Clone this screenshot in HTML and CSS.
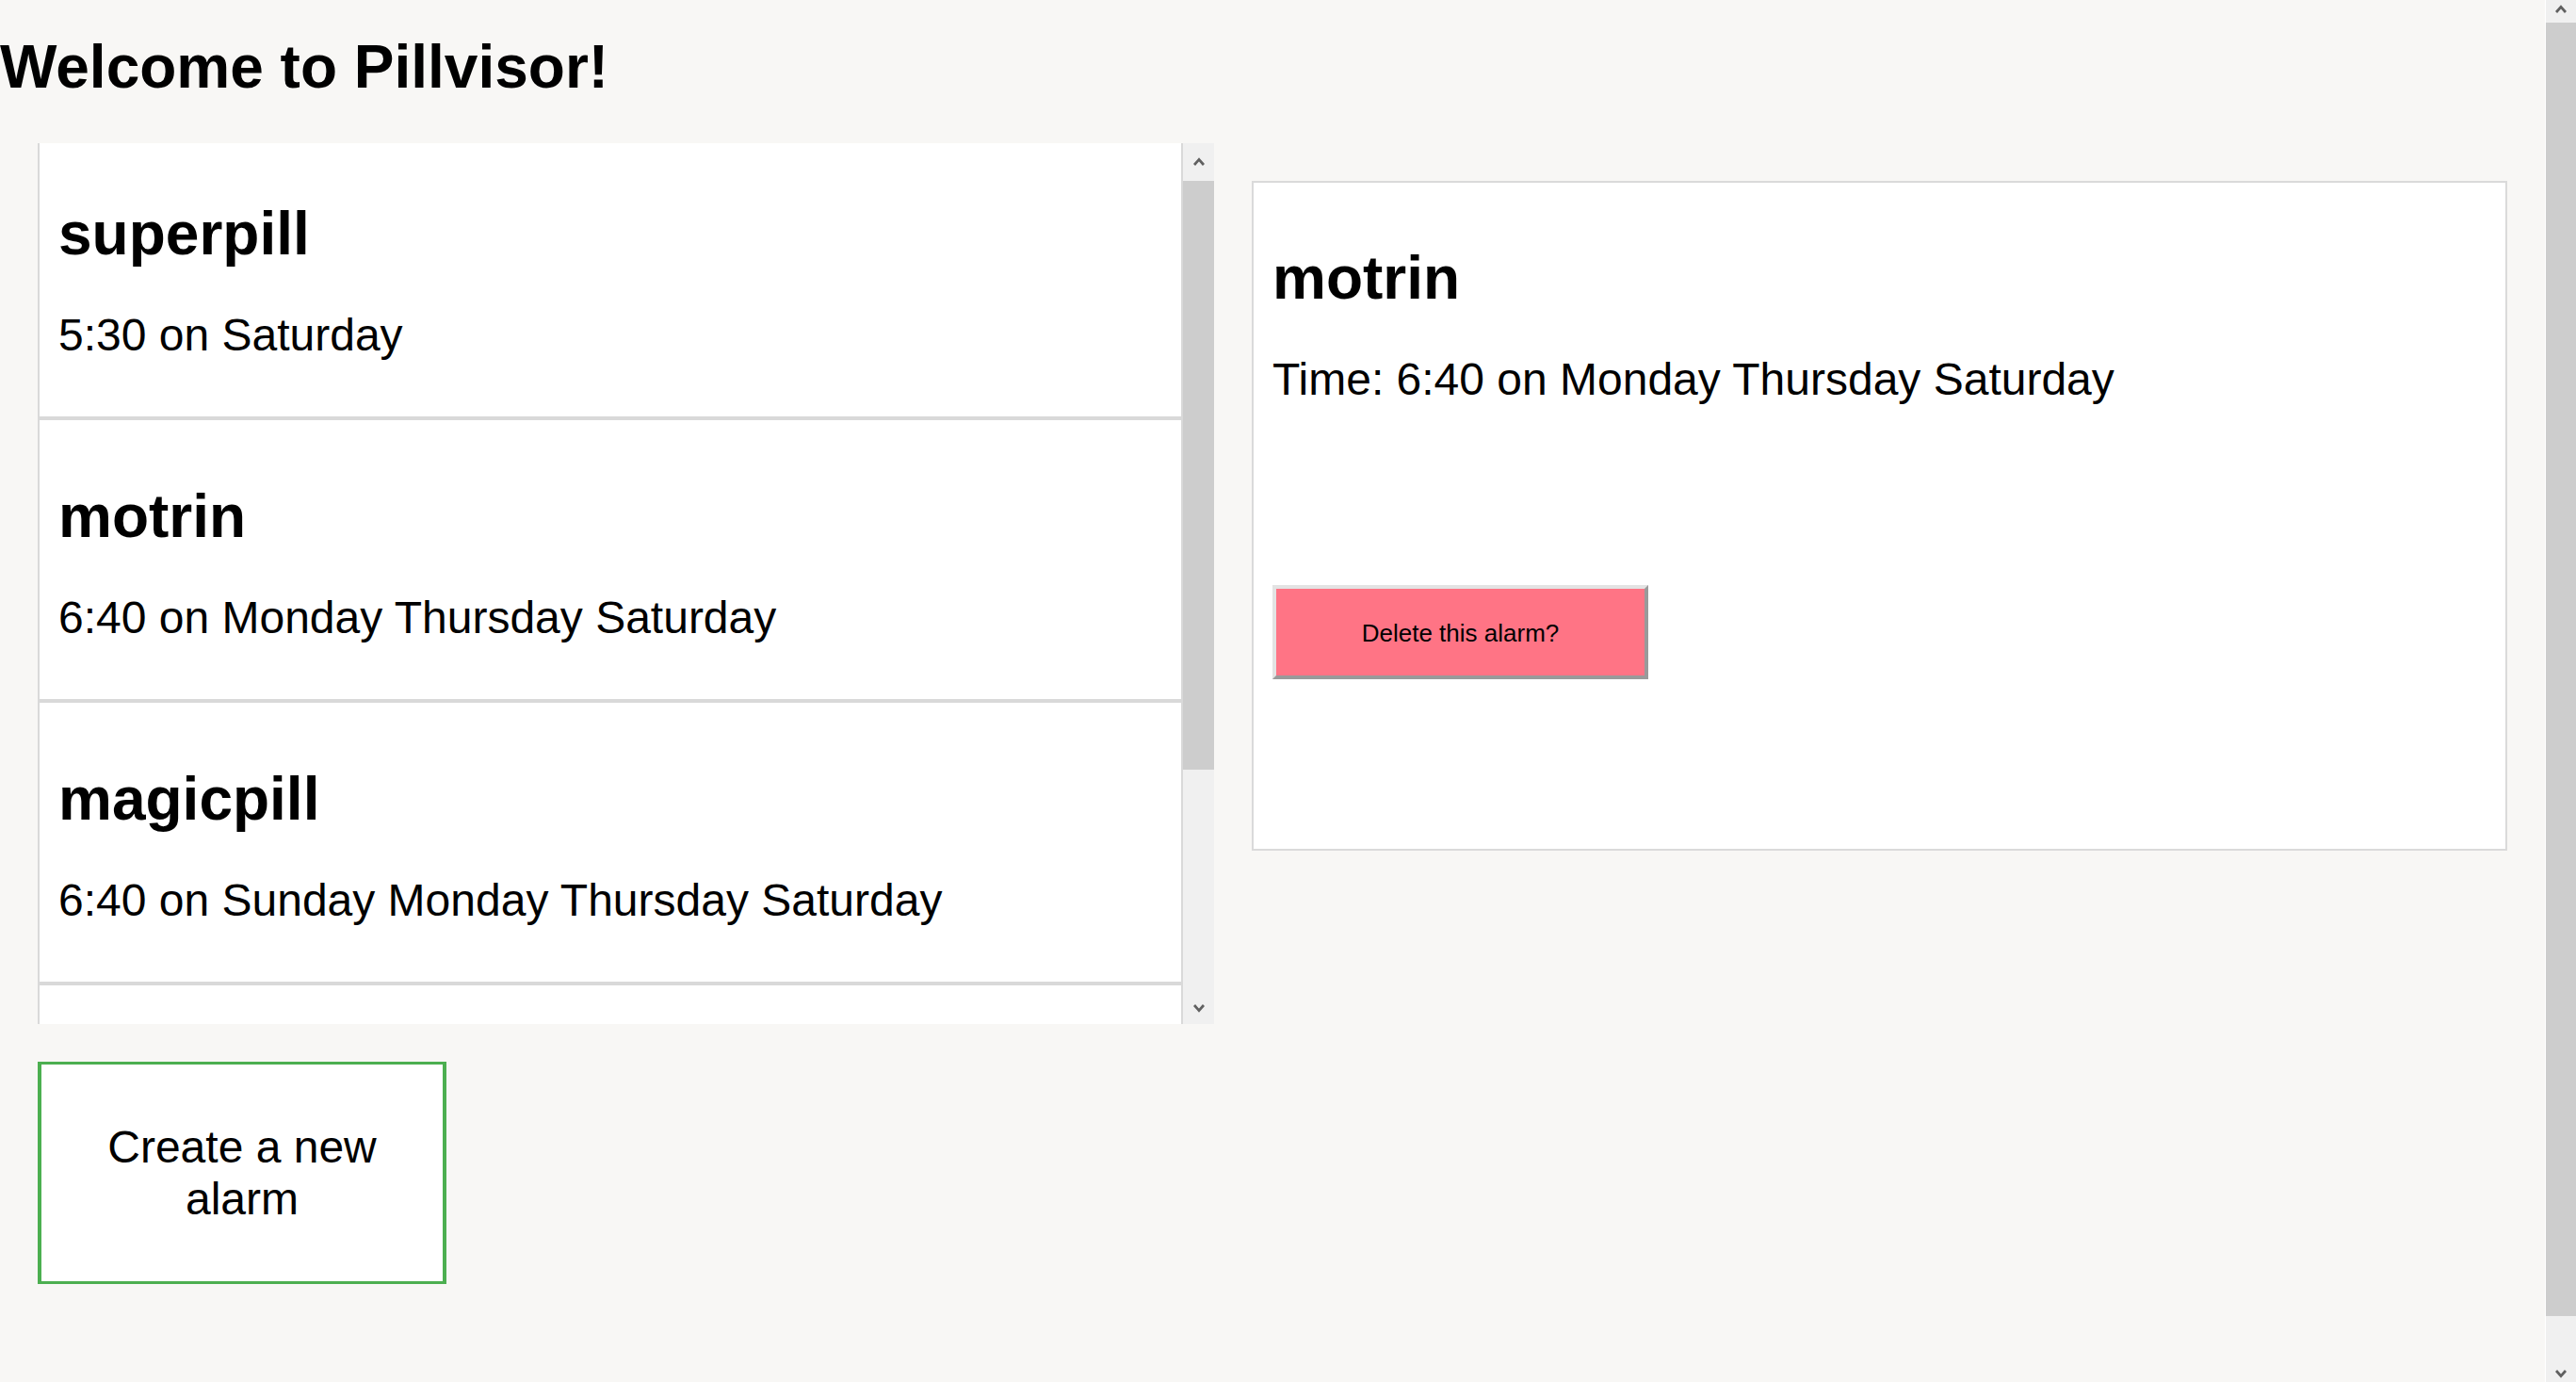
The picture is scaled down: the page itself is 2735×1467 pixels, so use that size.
FILE: index.html
```html
<!DOCTYPE html>
<html lang="en">
<head>
<meta charset="utf-8">
<title>Pillvisor</title>
<link rel="stylesheet" href="styles.css">
</head>
<body>
<div class="app">
  <main class="main">
    <h1 class="title">Welcome to Pillvisor!</h1>
    <div class="content">
      <div class="left">
        <div class="list">
          <div class="list-view">
            <div class="cards">
              <div class="card">
                <h2 class="card-name">superpill</h2>
                <p class="card-time">5:30 on Saturday</p>
              </div>
              <div class="card">
                <h2 class="card-name">motrin</h2>
                <p class="card-time">6:40 on Monday Thursday Saturday</p>
              </div>
              <div class="card">
                <h2 class="card-name">magicpill</h2>
                <p class="card-time">6:40 on Sunday Monday Thursday Saturday</p>
              </div>
              <div class="card card-empty"></div>
            </div>
          </div>
          <div class="scrollbar list-scrollbar">
            <div class="sb-btn sb-up">
              <svg class="chev" viewBox="0 0 12 9" width="12" height="9"><polyline points="1,8 6,2.4 11,8" /></svg>
            </div>
            <div class="sb-thumb"></div>
            <div class="sb-track"></div>
            <div class="sb-btn sb-down">
              <svg class="chev" viewBox="0 0 12 9" width="12" height="9"><polyline points="1,1 6,6.6 11,1" /></svg>
            </div>
          </div>
        </div>
        <button class="create-btn">Create a new alarm</button>
      </div>
      <section class="detail">
        <h2 class="detail-name">motrin</h2>
        <p class="detail-time">Time: 6:40 on Monday Thursday Saturday</p>
        <button class="delete-btn">Delete this alarm?</button>
      </section>
    </div>
  </main>
  <div class="scrollbar page-scrollbar">
    <div class="psb-btn psb-up">
      <svg class="chev" viewBox="0 0 12 9" width="12" height="9"><polyline points="1,8 6,2.4 11,8" /></svg>
    </div>
    <div class="psb-thumb"></div>
    <div class="sb-track"></div>
    <div class="psb-btn psb-down">
      <svg class="chev" viewBox="0 0 12 9" width="12" height="9"><polyline points="1,1 6,6.6 11,1" /></svg>
    </div>
  </div>
</div>
</body>
</html>
```

FILE: styles.css
```css
html, body {
  margin: 0;
  padding: 0;
  height: 100%;
  overflow: hidden;
}

body {
  background: #f8f7f5;
  color: #000;
  font-family: "Liberation Sans", Arial, sans-serif;
}

.app {
  display: flex;
  height: 100vh;
}

.main {
  flex: 1;
  min-width: 0;
}

.title {
  margin: 39px 0 49px;
  font-size: 64px;
  line-height: 64px;
  font-weight: 700;
}

.content {
  display: flex;
  align-items: flex-start;
  padding-left: 40px;
}

.left {
  width: 1249px;
  flex: none;
}

.list {
  display: flex;
  height: 935px;
  background: #fff;
}

.list-view {
  flex: 1;
  min-width: 0;
  overflow: hidden;
}

.cards {
  margin-top: -8px;
}

.card {
  background: #fff;
  border: 2px solid #d9d9d9;
  padding: 70px 20px 62px;
}

.card-empty {
  height: 164px;
}

.card-name {
  margin: 0;
  font-size: 64px;
  line-height: 64px;
  font-weight: 700;
}

.card-time {
  margin: 52px 0 0;
  font-size: 48px;
  line-height: 48px;
}

/* fake scrollbars */
.scrollbar {
  width: 33px;
  flex: none;
  display: flex;
  flex-direction: column;
  background: #f0f0f0;
}

.sb-btn {
  height: 40px;
  flex: none;
  display: flex;
  justify-content: center;
  box-sizing: border-box;
}

.sb-up {
  align-items: flex-start;
  padding-top: 15px;
}

.sb-down {
  align-items: flex-start;
  padding-top: 19px;
}

.sb-thumb {
  height: 625px;
  flex: none;
  background: #cdcdcd;
}

.sb-track {
  flex: 1;
}

.chev {
  display: block;
}

.chev polyline {
  fill: none;
  stroke: #606060;
  stroke-width: 2.8;
  stroke-linejoin: miter;
}

.page-scrollbar {
  width: 32px;
  border-left: 1px solid #ffffff;
  height: 100vh;
}

.psb-btn {
  height: 24px;
  flex: none;
  display: flex;
  justify-content: center;
  align-items: flex-start;
  box-sizing: border-box;
}

.psb-up {
  padding-top: 5px;
}

.psb-down {
  padding-top: 11px;
}

.psb-thumb {
  height: 1373px;
  flex: none;
  background: #cdcdcd;
}

.create-btn {
  display: block;
  box-sizing: border-box;
  margin-top: 40px;
  width: 434px;
  height: 236px;
  padding: 0 40px;
  background: #fff;
  border-style: solid;
  border-color: #4caf50;
  border-width: 3px 4px;
  color: #000;
  font-family: "Liberation Sans", Arial, sans-serif;
  font-size: 48px;
  line-height: 55px;
  text-align: center;
}

.detail {
  flex: 1;
  min-width: 0;
  margin: 40px 40px 0;
  background: #fff;
  border: 2px solid #dadada;
  padding: 69px 20px 180px;
}

.detail-name {
  margin: 0;
  font-size: 64px;
  line-height: 64px;
  font-weight: 700;
}

.detail-time {
  margin: 52px 0 0;
  font-size: 48px;
  line-height: 48px;
}

.delete-btn {
  display: block;
  box-sizing: border-box;
  margin-top: 194px;
  width: 399px;
  height: 100px;
  padding: 2px 0 0;
  background: #ff7485;
  border-style: solid;
  border-width: 4px;
  border-color: #e3e3e3 #9a9a9a #9a9a9a #e3e3e3;
  color: #000;
  font-family: "Liberation Sans", Arial, sans-serif;
  font-size: 26px;
  text-align: center;
}
```
